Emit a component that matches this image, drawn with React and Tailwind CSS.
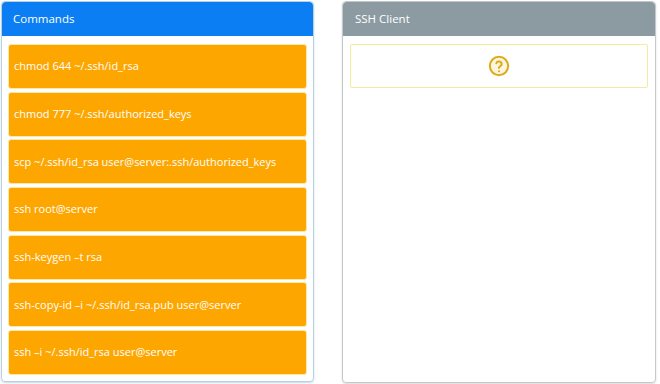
const commands = [
  'chmod 644 ~/.ssh/id_rsa',
  'chmod 777 ~/.ssh/authorized_keys',
  'scp ~/.ssh/id_rsa user@server:.ssh/authorized_keys',
  'ssh root@server',
  'ssh-keygen –t rsa',
  'ssh-copy-id –i ~/.ssh/id_rsa.pub user@server',
  'ssh –i ~/.ssh/id_rsa user@server',
]

export default function App() {
  return (
    <div
      className="w-[660px] h-[384px] bg-white flex items-start gap-[28px] pl-[1px] pt-[1px]"
      style={{ fontFamily: '"Open Sans", "DejaVu Sans", sans-serif' }}
    >
      <div className="w-[313px] h-[381px] border border-[#b8d0e0] rounded-sm flex flex-col shadow-[0_1px_2px_rgba(120,160,190,0.4)]">
        <div className="h-[34px] bg-[#0b7ef3] rounded-t-sm flex items-center pl-[11px] text-white text-[11.5px]">
          Commands
        </div>
        <div className="flex flex-col gap-[2.7px] px-[6px] pt-[8px]">
          {commands.map((cmd) => (
            <div
              key={cmd}
              className="h-[45px] bg-[#fea600] rounded-[3px] border border-[#ffe9a6] flex items-center pl-[5px] text-white text-[11px]"
            >
              {cmd}
            </div>
          ))}
        </div>
      </div>

      <div className="w-[314px] h-[382px] border border-[#c4c8ca] rounded-sm flex flex-col shadow-[0_1px_2px_rgba(0,0,0,0.15)]">
        <div className="h-[34px] bg-[#8c9ba2] rounded-t-sm flex items-center pl-[12px] text-white text-[11.5px]">
          SSH Client
        </div>
        <div className="px-[7px] pt-[8px]">
          <div className="h-[44px] border border-[#f3ec9c] rounded-[2px] flex items-center justify-center">
            <svg width="22" height="22" viewBox="0 0 24 24" fill="none" stroke="#dcaa1e" strokeWidth="2.2" strokeLinecap="round" strokeLinejoin="round">
              <circle cx="12" cy="12" r="10" fill="#fdf6dc" />
              <path d="M9.1 9a3 3 0 0 1 5.8 1c0 2-3 2.6-3 4.2" />
              <path d="M12 17.6h.01" />
            </svg>
          </div>
        </div>
      </div>
    </div>
  )
}
